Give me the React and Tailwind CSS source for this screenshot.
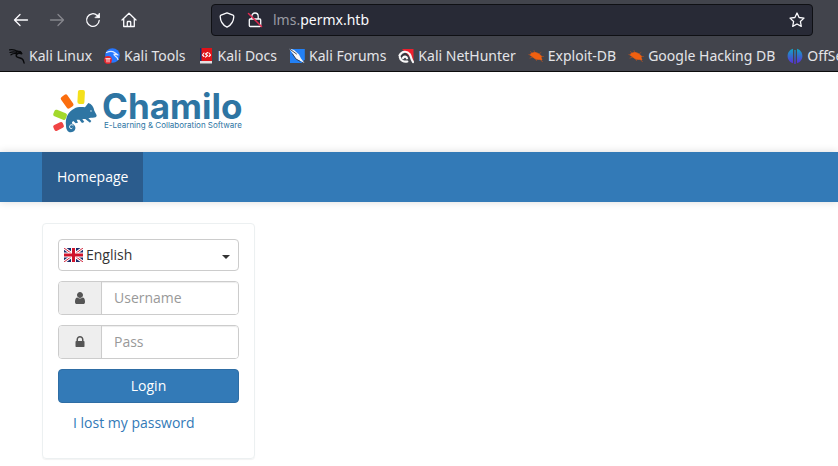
function Icon({ children, className = "size-4", ...props }) {
  return (
    <svg
      viewBox="0 0 16 16"
      fill="none"
      stroke="currentColor"
      strokeWidth="1.3"
      strokeLinecap="round"
      strokeLinejoin="round"
      aria-hidden="true"
      className={`shrink-0 ${className}`}
      {...props}
    >
      {children}
    </svg>
  );
}

const dragon = (
  <g stroke="#08090b" fill="none">
    <path d="M0.5 1.8c3-.6 5.800 0 8 1.700M1 4.500c2.500-1 5-.8 7 0M2 6.800c1.600-1.200 3.600-1.500 5.400-1.200" strokeWidth="1.200" />
    <path d="M8 3.200l3.600.6 1.200 1.900-3-.7c-1.600.5-2.800 1.600-2.600 3 .4 1.900 3.800 1.500 5.600 2.700 1.400.9 1.900 2 2.300 4.300" strokeWidth="1.400" />
  </g>
);

const bug = (
  <g stroke="#c2531c" strokeWidth=".6">
    <path d="M2.500 3.500l2 2.500M6 2.500l1 2.500M.8 6.500l3 .7M2 10l3-1M8.500 12.500l-1-2M13 4.500l-2 1.500M14 8.500h1.500M13 12.500l1.500 1" />
    <path d="M3 5.500c2.500-1.500 5.500-1.500 8 .5l2.500 2-.3 1.800.8 2.200-2.700-.6c-2.500.4-5-.7-6.500-2.400L2.500 7.500z" fill="#f2600f" stroke="#f2600f" />
  </g>
);

const bookmarks = [
  { name: "Kali Linux", art: dragon },
  {
    name: "Kali Tools",
    art: (
      <g stroke="none">
        <circle cx="8.500" cy="7.500" r="7.300" fill="#2777ff" />
        <path d="M2.500 4.500c3-1.500 6-1.500 8 0l3.500 2.500-4-.8c-1 1.500 3 2 4 5.300" fill="none" stroke="#dfe9ff" strokeWidth="1.200" />
        <circle cx="4" cy="12" r="3.900" fill="#e5252c" />
        <path d="M1.800 10.700h4.400M3 11v3M5 11v3" stroke="#fff" strokeWidth=".9" />
      </g>
    ),
  },
  {
    name: "Kali Docs",
    art: (
      <g stroke="none">
        <path d="M2 0h12v13H2z" fill="#e01218" />
        <path d="M2 0h1.500v14H2z" fill="#12306e" />
        <path d="M2 13h12v2.500H2z" fill="#e3dfe0" />
        <path d="M6 5L4.500 7 6 8.500M11 5l1.500 2L11 8.500M9.700 4.500L7.500 6l2 1.500-2 1.700" fill="none" stroke="#fff" strokeWidth="1.100" />
      </g>
    ),
  },
  {
    name: "Kali Forums",
    art: (
      <g stroke="none">
        <path d="M1 1h14.800v10.500L12.500 15H1z" fill="#2280f5" />
        <path d="M0 .5l5 1.500 5 4.500 2 4 3.500 4.500-5-2.500-3.500-1.500-3-5z" fill="#f5f7fa" />
        <path d="M0 .5l7.500 5.500M3.500 6l3.500 5 4 2.300" fill="none" stroke="#333945" strokeWidth=".9" />
      </g>
    ),
  },
  {
    name: "Kali NetHunter",
    art: (
      <g stroke="none">
        <path d="M4 1h11.500v12.500L11 8z" fill="#ef1f2d" />
        <path d="M1.500 7.500C4 2.500 9.500 3 11.500 6c2 2.800 1 4 3.500 8M1.800 9c.5 3.500 4 5.300 7.500 4.500M5 10c.8-2 3.500-2 4 .3" fill="none" stroke="#f7f7f7" strokeWidth="2.200" />
        <path d="M3.500 8.500c1.500-3 5-3.500 6.500-1" fill="none" stroke="#27292f" strokeWidth=".8" />
      </g>
    ),
  },
  { name: "Exploit-DB", art: bug },
  { name: "Google Hacking DB", art: bug },
  {
    name: "OffSec",
    art: (
      <g stroke="none">
        <defs>
          <linearGradient id="offsec" x1="0" y1="0" x2="0" y2="1">
            <stop offset="0" stopColor="#12a5c4" />
            <stop offset="1" stopColor="#5b2bd8" />
          </linearGradient>
        </defs>
        <path d="M6 .8v14.400C2.800 14.300.6 11.500.6 8S2.800 1.700 6 .8zM7.300 2h1.400v14H7.300zM10 .8c3.200.9 5.400 3.700 5.400 7.200s-2.200 6.300-5.400 7.200z" fill="url(#offsec)" />
      </g>
    ),
  },
];

function BrowserBar() {
  return (
    <div className="overflow-hidden border-b border-[#0c0c0d] bg-[#42444c] font-['Noto_Sans','Open_Sans',sans-serif] text-[14px] leading-5 text-[#fbfbfe]">
      <div className="flex h-10 items-center pl-[13px] pr-[25px]">
        <div className="flex gap-5">
          <button type="button" aria-label="Back">
            <Icon>
              <path d="M14.500 8h-13M7 2.500L1.500 8 7 13.500" />
            </Icon>
          </button>
          <button type="button" aria-label="Forward" className="text-[#85868c]">
            <Icon>
              <path d="M1.500 8h13M9 2.500L14.500 8 9 13.500" />
            </Icon>
          </button>
          <button type="button" aria-label="Reload">
            <Icon>
              <path d="M14.200 8.500a6.300 6.300 0 1 1-2-5.100l1.800 1.800" />
              <path d="M14.500 1.500v4.200h-4.200z" fill="currentColor" strokeWidth=".8" />
            </Icon>
          </button>
          <button type="button" aria-label="Home">
            <Icon>
              <path d="M1 8l7-6.800L15 8M2.700 6.800v7.700h10.600V6.800M6.300 14.300v-4.100q0-.7.7-.7h2q.7 0 .7.700v4.100" />
            </Icon>
          </button>
        </div>
        <div className="ml-[74px] flex h-8 flex-1 items-center rounded border border-[#0f1014] bg-[#282a36] px-[7px]">
          <Icon>
            <path d="M8 .8l6 2.400c.7.300.8.700.8 1.400-.2 5-2.600 8.500-6.800 10.600C3.800 13.100 1.400 9.600 1.200 4.600c0-.7.1-1.100.8-1.400z" />
          </Icon>
          <Icon className="ml-3 size-4">
            <path d="M4.800 7V4.200a3.200 3.200 0 0 1 6.400 0V7M3.200 7h9.600q.9 0 .9.900v5.700q0 .9-.9.900H3.200q-.9 0-.9-.9V7.900q0-.9.900-.9z" />
            <path d="M1.500 1.500l13 13" stroke="#e22850" strokeWidth="1.500" />
          </Icon>
          <div className="ml-[10px] flex-1">
            <span className="text-[#9a9ba3]">lms.</span>permx.htb
          </div>
          <button type="button" aria-label="Bookmark this page">
            <Icon>
              <path d="M8 1l2.100 4.500 4.900.6-3.600 3.400.9 4.900L8 12l-4.300 2.400.9-4.900L1 6.100l4.900-.6z" />
            </Icon>
          </button>
        </div>
      </div>
      <nav aria-label="Bookmarks" className="flex h-[31px] items-center gap-3 pl-[9px]">
        {bookmarks.map(({ name, art }) => (
          <a key={name} href="#" className="flex shrink-0 items-center gap-1 text-[#e4e4e8]">
            <Icon>{art}</Icon>
            {name}
          </a>
        ))}
      </nav>
    </div>
  );
}

function Logo() {
  return (
    <svg viewBox="0 0 200 50" role="img" aria-label="Chamilo" className="h-[50px] w-[200px]">
      <g transform="scale(.3333)">
        <rect x="89" y="12" width="21" height="42" rx="6" fill="#f4e01b" transform="rotate(3 99 33)" />
        <rect x="46" y="26" width="23" height="42" rx="6" fill="#fb6d0e" transform="rotate(-35 57 47)" />
        <rect x="26" y="67" width="21" height="40" rx="6" fill="#a3d92c" transform="rotate(-68 36 87)" />
        <rect x="16" y="112" width="31" height="19" rx="6" fill="#f04444" transform="rotate(-26 31 121)" />
        <path
          d="M54 118C51 96 61 76 78 68c11-6 23-5 33-4l10-13c10 3 16 12 18 23l7 14c0 7-8 8-17 7l-8 2 9 8-4 5-14-11-9 0 6 9-7 3-8-10h-8l4 9-7 2-7-7c-6 3-5 9 2 11 9 9 3 22-10 23-9 0-14-8-14-21z"
          fill="#2e75a3"
        />
        <path d="M76 119c-5-6-13-1-11 5 1 4 6 5 8 2" fill="none" stroke="#fff" strokeWidth="3" />
        <circle cx="129" cy="75" r="2.500" fill="#cfe0eb" />
      </g>
      <g fill="#2e75a3" fontFamily="Inter, sans-serif">
        <text x="54" y="33" fontSize="35" fontWeight="700">
          Chamilo
        </text>
        <text x="56" y="42" fontSize="8">
          E-Learning &amp; Collaboration Software
        </text>
      </g>
    </svg>
  );
}

function Flag() {
  return (
    <svg viewBox="0 0 19 14" aria-hidden="true" className="pointer-events-none absolute left-[6px] top-[9px] h-[14px] w-[19px]">
      <path d="M0 0h19v14H0z" fill="#1b2d6b" />
      <path d="M0 0l19 14M19 0L0 14" stroke="#fff" strokeWidth="3" />
      <path d="M0 0l19 14M19 0L0 14" stroke="#d22038" strokeWidth="1" />
      <path d="M9.500 0v14M0 7h19" stroke="#fff" strokeWidth="5" />
      <path d="M9.500 0v14M0 7h19" stroke="#d0142c" strokeWidth="3" />
    </svg>
  );
}

function Field({ id, label, type, path }) {
  return (
    <div className="flex h-[34px] rounded border border-[#cccccc]">
      <label htmlFor={id} aria-label={label} className="flex w-[43px] shrink-0 items-center justify-center rounded-l-[3px] border-r border-[#cccccc] bg-[#eeeeee]">
        <svg viewBox="0 0 1792 1792" fill="#555555" aria-hidden="true" className="size-[14px]">
          <path d={path} />
        </svg>
      </label>
      <input
        id={id}
        type={type}
        placeholder={label}
        className="w-full min-w-0 rounded-r-[3px] bg-white px-3 shadow-[inset_0_1px_1px_rgba(0,0,0,0.075)] placeholder:text-[#999999]"
      />
    </div>
  );
}

const userPath =
  "M1536 1399q0 109-62.500 187t-150.500 78h-854q-88 0-150.500-78t-62.500-187q0-85 8.500-160.500t31.500-152 58.500-131 94-89 134.500-34.500q131 128 313 128t313-128q76 0 134.500 34.500t94 89 58.500 131 31.500 152 8.500 160.500zm-256-887q0 159-112.500 271.500t-271.500 112.500-271.500-112.500-112.500-271.500 112.500-271.500 271.500-112.500 271.500 112.500 112.500 271.500z";
const lockPath =
  "M640 768h512v-192q0-106-75-181t-181-75-181 75-75 181v192zm832 96v576q0 40-28 68t-68 28h-960q-40 0-68-28t-28-68v-576q0-40 28-68t68-28h32v-192q0-184 132-316t316-132 316 132 132 316v192h32q40 0 68 28t28 68z";

function LoginPanel() {
  return (
    <form
      onSubmit={(e) => e.preventDefault()}
      className="flex w-[213px] flex-col gap-[10px] rounded border border-[#ecf0f1] px-[15px] pb-[25px] pt-[15px] shadow-[0_1px_1px_rgba(0,0,0,0.05)]"
    >
      <div className="relative">
        <select
          aria-label="Language"
          className="block h-8 w-full appearance-none rounded border border-[#cccccc] bg-white pl-[27px] pr-6 text-[#333333]"
        >
          <option>English</option>
        </select>
        <Flag />
        <span className="pointer-events-none absolute right-[9px] top-4 border-x-4 border-t-4 border-x-transparent border-t-[#333333]" />
      </div>
      <Field id="login" label="Username" type="text" path={userPath} />
      <Field id="password" label="Pass" type="password" path={lockPath} />
      <button type="submit" className="h-[34px] rounded border border-[#2e6da4] bg-[#337ab7] text-white">
        Login
      </button>
      <a href="#" className="pl-[15px] text-[#337ab7]">
        I lost my password
      </a>
    </form>
  );
}

export default function App() {
  return (
    <div className="min-h-screen bg-white font-['Open_Sans',sans-serif] text-[14px] leading-5 text-[#333333]">
      <BrowserBar />
      <header>
        <div className="flex h-20 px-12 pt-[14px]">
          <a href="#">
            <Logo />
          </a>
        </div>
        <nav className="flex h-[50px] bg-[#337ab7] px-[42px] shadow-[0_0_8px_rgba(0,0,0,0.15)]">
          <a href="#" className="bg-[#2b5c8d] p-[15px] text-white">
            Homepage
          </a>
        </nav>
      </header>
      <main className="px-[42px] pt-[21px]">
        <LoginPanel />
      </main>
    </div>
  );
}
